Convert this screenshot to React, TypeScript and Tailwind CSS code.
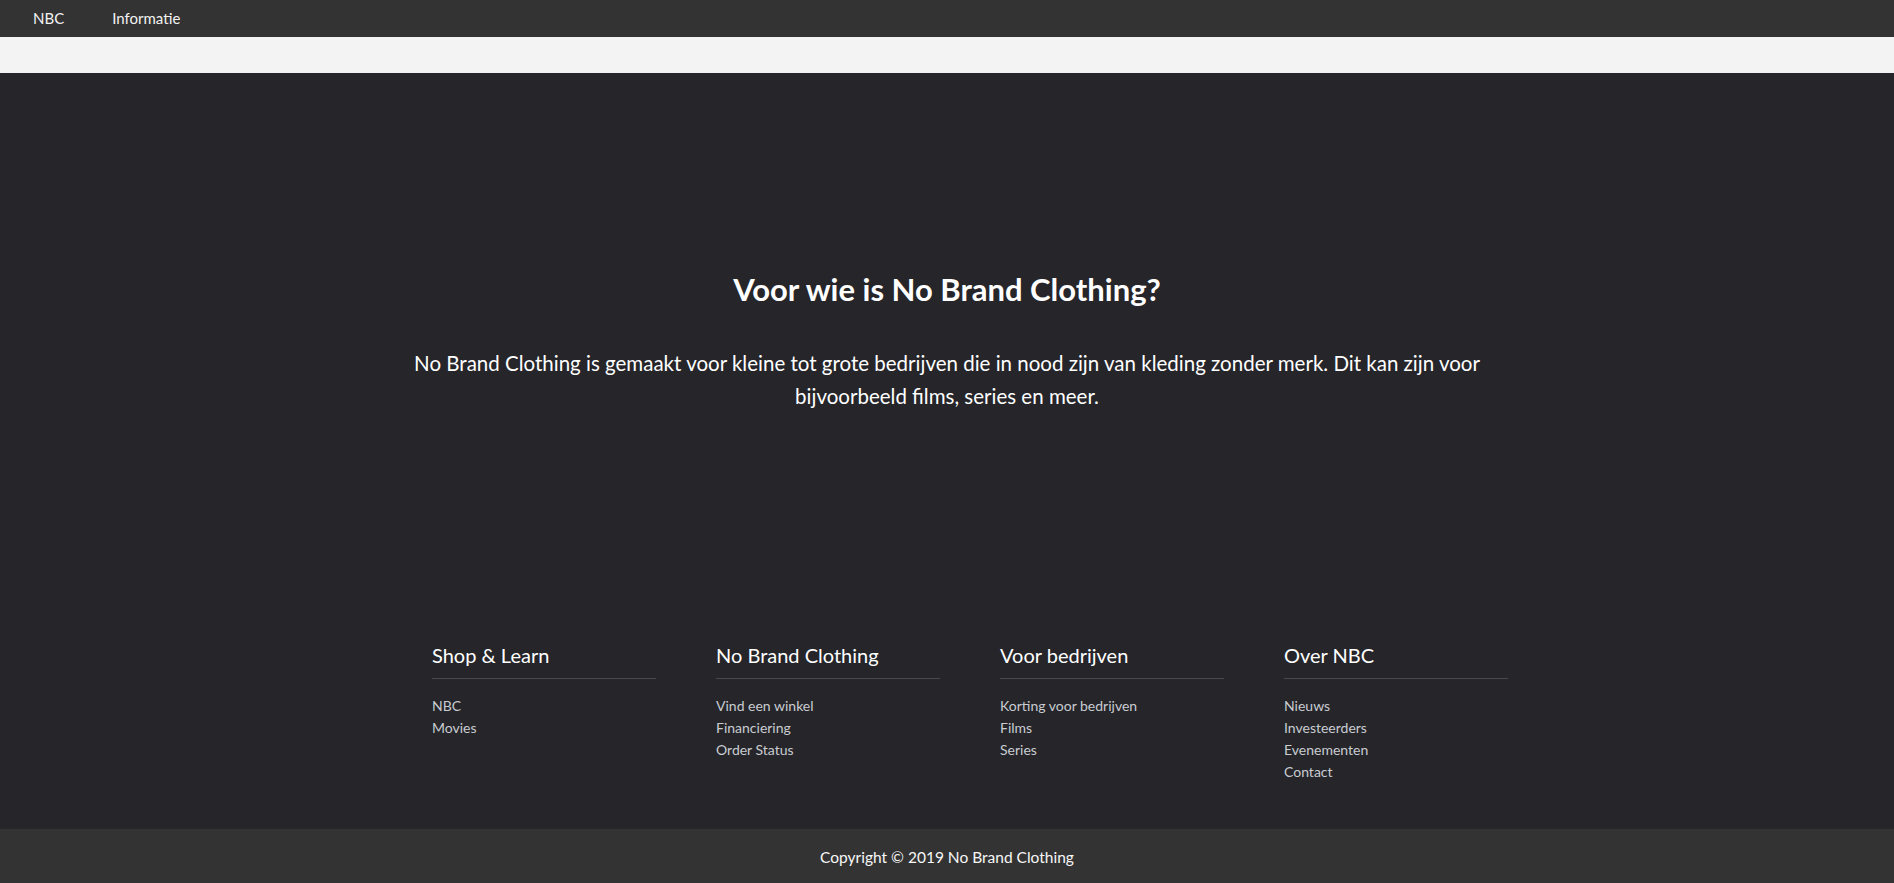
// Landing page for No Brand Clothing: nav, intro section, link footer.

const columns = [
  { title: "Shop & Learn", links: ["NBC", "Movies"] },
  {
    title: "No Brand Clothing",
    links: ["Vind een winkel", "Financiering", "Order Status"],
  },
  {
    title: "Voor bedrijven",
    links: ["Korting voor bedrijven", "Films", "Series"],
  },
  {
    title: "Over NBC",
    links: ["Nieuws", "Investeerders", "Evenementen", "Contact"],
  },
];

export default function App() {
  return (
    <div
      className="min-h-screen flex flex-col bg-[#25252a] text-white"
      style={{ fontFamily: "Lato, 'Liberation Sans', sans-serif" }}
    >
      <nav className="h-[37px] bg-[#333333] flex items-center pl-[33px] gap-[48px] text-[15px] text-[#f2f2f2]">
        <a href="#">NBC</a>
        <a href="#">Informatie</a>
      </nav>
      <div className="h-[36px] bg-[#f3f3f3]" />

      <main className="flex-1 flex flex-col">
        <section className="pt-[198px] text-center">
          <h1 className="text-[31px] font-bold leading-[1.2]">
            Voor wie is No Brand Clothing?
          </h1>
          <p className="w-[1110px] mx-auto mt-[39px] text-[20.5px] leading-[33px]">
            No Brand Clothing is gemaakt voor kleine tot grote bedrijven die in
            nood zijn van kleding zonder merk. Dit kan zijn voor bijvoorbeeld
            films, series en meer.
          </p>
        </section>

        <footer className="w-[1136px] mx-auto mt-auto grid grid-cols-4 pb-[46px]">
          {columns.map((col) => (
            <div key={col.title} className="pl-[53px] pr-[7px]">
              <h3 className="text-[20px] leading-[24px] pb-[11px] border-b border-[#4a4a4e]">
                {col.title}
              </h3>
              <ul className="mt-[16px] text-[14px] leading-[22px] text-[#c9ccd1]">
                {col.links.map((l) => (
                  <li key={l}>
                    <a href="#">{l}</a>
                  </li>
                ))}
              </ul>
            </div>
          ))}
        </footer>
      </main>

      <div className="h-[54px] pt-[3px] bg-[#333333] flex items-center justify-center text-[15.5px] text-[#f7f7f7]">
        Copyright © 2019 No Brand Clothing
      </div>
    </div>
  );
}
